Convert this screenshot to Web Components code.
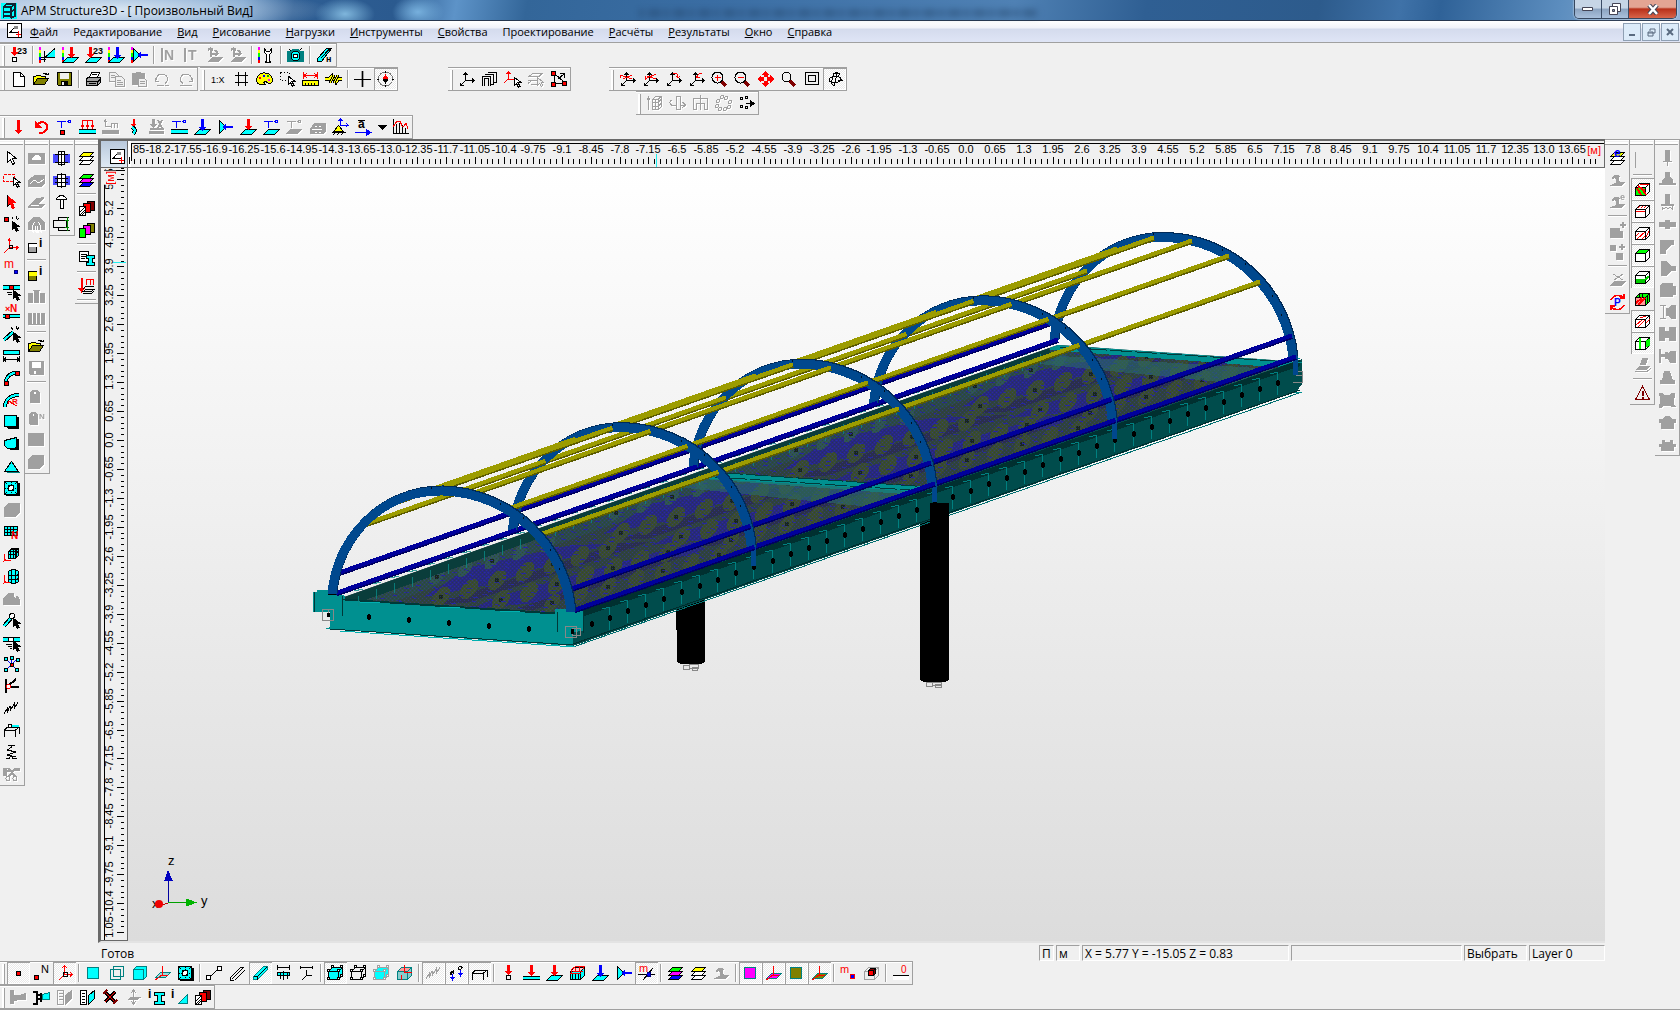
<!DOCTYPE html>
<html lang="ru">
<head>
  <meta charset="UTF-8">
  <title>APM Structure3D</title>
  <style>
    body {
      margin: 0;
      min-height: 100vh;
      display: flex;
      flex-direction: column;
      background: #f0f0f0;
      font: 12px/16px "Open Sans", "Noto Sans", sans-serif;
      color: #000;
      overflow: hidden;
    }
    .row {
      display: flex;
      height: 24px;
    }
    .gap-draw { margin-left: 2px; }
    .gap-view { margin-left: 50px; }
    .gap-zoom { margin-left: 38px; }
    .gap-edit { margin-left: 636px; }
    main {
      flex: 1;
      display: flex;
      min-height: 0;
      min-width: 0;
    }
    .dock {
      display: flex;
      align-items: flex-start;
      box-shadow: inset 0 1px #a0a0a0;
    }
    .dock.left { width: 98px; }
    .center {
      flex: 1;
      min-width: 0;
      display: flex;
      flex-direction: column;
    }
    footer {
      border-bottom: 1px solid #a0a0a0;
    }
  </style>
</head>
<body>
  <title-bar>APM Structure3D - [ Произвольный Вид]</title-bar>
  <menu-bar></menu-bar>

  <div class="row">
    <tool-bar items="load123 | resFrame resLoad res23 resPlate resSide | barN- barT- axes1- axes2- | wrench | camera | beamH"></tool-bar>
  </div>
  <div class="row">
    <tool-bar items="new open save | print copy- paste- undo- redo-"></tool-bar>
    <tool-bar class="gap-draw" items="scale hash palette pick ruler knot | cross compass*"></tool-bar>
    <tool-bar class="gap-view" items="axis frames axisPick layersPick- nodes"></tool-bar>
    <tool-bar class="gap-zoom" items="rotX rotY rotZ rotW zoomIn zoomOut pan zoomAll rect orbit*"></tool-bar>
  </div>
  <div class="row">
    <tool-bar class="gap-edit" items="extrude- spin- mirror- ring- move"></tool-bar>
  </div>
  <div class="row">
    <tool-bar items="force moment tempNode distLoad distAxis- bend numLoad- tempBar plateB sideB plateR tempPlate tempGray- snow- support accel drop graph"></tool-bar>
  </div>

  <main>
    <div class="dock left">
      <tool-bar vertical items="cursor selRect cursorR cursorN axisR mass nodeBar barN2 barPick dimBar arcNode arcR sq1 sq2 tri holed blob- meshN cubeM cylM blobN- barNode barMid star hinge spring1 base spring2 cut-"></tool-bar>
      <tool-bar vertical items="g1- g2- g3- g4- infoG | infoY g5- g6- | openF saveG- | can- canN- g7- g8-"></tool-bar>
      <tool-bar vertical items="bolt1 bolt2 bolt3 weld"></tool-bar>
      <tool-bar vertical items="layY layG | cards1 cards2 | listI | loadLay |"></tool-bar>
    </div>
    <div class="center">
      <child-window>
        <scale-ruler slot="top" axis="x" zero="838" min="-29" max="21" mark="528" cut="85"></scale-ruler>
        <scale-ruler slot="side" axis="y" zero="272" min="-17" max="9" mark="94" cut="1.05"></scale-ruler>
        <bridge-view></bridge-view>
      </child-window>
      <status-bar></status-bar>
    </div>
    <div class="dock">
      <tool-bar vertical="right" items="layE wave1- wave2- | plus1- plus2- | flat- pRot"></tool-bar>
      <tool-bar vertical="right" items="blank | bx1* bx2* bx3* bx4* bx5* bx6 bx7* bx8* stack- | warn"></tool-bar>
      <tool-bar vertical="right" items="s1- s2- s3- s4- s5- s6- s7- s8- s9- s10- s11- s12- s13- s14-"></tool-bar>
    </div>
  </main>

  <footer>
    <div class="row">
      <tool-bar items="dot* dotN axisN* | pl1 pl2 pl3 plAxis holed | seg rods rod* frameC frameA | cubeF* cubeW cubeG cubeA | spr* hang* tableT* | fNode fBar fPlate fCube plateB sideB2 massX* | layG layY wave1- | sqM* paM* sqO* paO* | massN cubeR | zeroL"></tool-bar>
    </div>
    <div class="row">
      <tool-bar items="pipeG- pipe listG- listC nails flatG- iBeam iTri cards1"></tool-bar>
    </div>
  </footer>

  <script>
    const K = '#000', R = '#f00', B = '#00f', C = '#0ff', G = '#a0a0a0', T = '#008080';
    const Y = '#ff0', O = '#808000', M = '#f0f', W = '#fff', L = '#0f0', D = '#800000';

    // small drawing helpers, all on a 17x16 grid
    const s = (d, c = K, w = 1) => `<path d="${d}" fill="none" stroke="${c}" stroke-width="${w}"/>`;
    const f = (d, c = K) => `<path d="${d}" fill="${c}"/>`;
    const o = (d, c = C, k = K) => `<path d="${d}" fill="${c}" stroke="${k}"/>`;
    const ci = (x, y, r, c = 'none', k = K) => `<circle cx="${x}" cy="${y}" r="${r}" fill="${c}" stroke="${k}"/>`;
    const t = (x, y, str, c = K, z = 9, w = 'bold') => `<text x="${x}" y="${y}" fill="${c}" font-size="${z}" font-weight="${w}">${str}</text>`;
    const sq = (x, y, c = R, n = 4) => o(`M${x + .5} ${y + .5}h${n}v${n}h-${n}z`, c);
    const dn = (x, y, h, c = R) => f(`M${x - 1} ${y}h3v${h - 4}h2v1h-1v1h-1v1h-1v1h-1v-1h-1v-1h-1v-1h-1v-1h2z`, c);
    const lf = (x, y, c = B) => f(`M${x} ${y}l4-4v3h7v2h-7v3z`, c);
    const plate = (c = C, k = K) => o('M.5 15.500l5-5h11l-5 5z', c, k);
    const side = (c = C, k = K) => o('M2.5 1.5v13l5-5v-3z', c, k);
    const bands = f('M0 0h2v3h-2z', M) + f('M0 3h2v3h-2z', Y) + f('M0 6h2v4h-2z', L) + f('M0 10h2v3h-2z', B) + f('M0 13h2v3h-2z', R);
    const tri3 = (c = K) => s('M7.5 2v8M7.5 9.5h9M7 10l-5 5M5.5 4l2-2 2 2M14 7.5l2 2-2 2M2.5 11.5v3h3', c);
    const ptr = (x, y, c = W) => o(`M${x + .5} ${y + .5}v8l2-2 2 4 1.500-1-2-4h3z`, c);
    const lay = (a, b, c) => o('M1.500 14.500l4-4h10l-4 4z', c) + o('M1.500 10.500l4-4h10l-4 4z', b) + o('M1.500 6.500l4-4h10l-4 4z', a);
    const disk = (c, k, w) => o('M1.500 1.500h14v13h-13l-1-1z', c, k) + f('M4 2h9v6h-9z', w) + f('M5 10h7v4h-7z', k) + f('M6 11h2v3h-2z', w);
    const folder = o('M.5 13.500v-8h2l1-1h4l1 1h4v2', Y) + o('M.5 13.500l4-6h11l-4 6z', O) + s('M9.500 3.500c1-2 4-2 5 0M12 3.500h3v-2');
    const cube = (a, b, c, k = K) => o('M1.500 6.500h10v8h-10z', a, k) + o('M1.500 6.500l4-4h10l-4 4z', b, k) + o('M11.500 6.500l4-4v8l-4 4z', c, k);
    const dots4 = (k, c = W) => ['0 4', '10 4', '13 0', '4 0', '0 12', '10 12', '13 9'].map(p => o(`M${p.split(' ')[0]}.5 ${p.split(' ')[1]}.5h2v2h-2z`, c, k)).join('');
    const lens = ci(6.5, 6.500, 5.500) + s('M11 11l4 4', D, 3);
    const table = c => s('M1 14.500v-6l3-3h12v6M1 8.500h11v6M12 8.500l4-3', c);
    const zig = c => s('M1 14l3-5v4l3-7v5l4-7v5l4-7', c);
    const waveG = f('M0 14l4-2c4 0 4-4 2-6l-3 1c0-4 5-6 8-3l-1 3c-1 3 2 4 6 3l-3 4z', G);
    const tee = (c = B) => s('M1 2.500h9M5.500 2v7', c) + ci(13.500, 2.500, 1.500, 'none', c);
    const gridP = (k = K) => s('M4.500 1v14M8.500 1v14M12.500 1v14M1 5.500h15M1 9.500h15', k);
    const pages = (a, b, c) => o('M9.500 1.500h7v9h-7z', c) + o('M5.500 3.500h7v9h-7z', b) + o('M1.500 6.500h6v9h-6z', a);

    const ICONS = {
      load123: dn(4, 0, 9) + sq(2, 10, W) + t(7, 7, '23', K, 9),
      resFrame: bands + f('M6 9l10-8v9h-10z', C) + s('M6 10.500l10-9M2 10.500h14M5.500 4v11M2 12.500h5'),
      resLoad: bands + plate() + dn(9, 0, 11),
      res23: plate() + dn(5, 0, 11) + t(8, 7, '23', K, 9),
      resPlate: bands + plate() + dn(9, 0, 12, B),
      resSide: bands + side() + lf(6, 8),
      barN: s('M1.500 1v14', G, 2) + t(4, 13, 'N', G, 14),
      barT: s('M1.500 1v14', G, 2) + t(5, 13, 'T', G, 14),
      axes1: f('M2 15l4-5h11l-4 5z', G) + s('M4.500 1v9M4 6.500h8M2 3l2.500-2 2.500 2M9 3l3 3.500-3 2', G, 2),
      axes2: f('M2 15l4-5h11l-4 5z', G) + s('M4.500 1v9M4 6.500h8M2 3l2.500-2 2.500 2M9 3l3 3.500-3 2', G, 2),
      wrench: bands + o('M6.500 1.500v4l2 2v6l-1 2h5l-1-2v-6l2-2v-4l-2 3h-3z', W),
      camera: o('M.5 4.500h4l1-2h6l1 2h4v10h-16z', T, T) + ci(8.500, 9, 4.500, C) + ci(8.500, 9, 2, W) + s('M2 2l2 2M15 1l-2 2'),
      beamH: o('M1.500 11.500l9-10h5l-10 13h-4z', C) + s('M5 11l9-9.500') + t(10, 15, 'н', K, 9),

      new: o('M3.500 1.500h7l4 4v10h-11z', W) + s('M10.500 1v4.500h4'),
      open: folder, openF: folder,
      save: disk(O, K, '#f0f0f0'),
      saveG: disk(G, G, W),
      print: o('M4.500 6.500l2-5h8l-2 5z', W) + o('M1.500 7.500l2-1h12v5l-3 3h-11z', G) + s('M1 10.500h12l3-3M4 12.500h7M7 3.500h5') + s('M12.500 10v5'),
      copy: o('M1.500 1.500h6l3 3v6h-9z', '#f0f0f0', G) + o('M7.500 5.500h6l3 3v7h-9z', '#f0f0f0', G) + s('M3 4.500h4M3 6.500h4M9 9.500h4M9 11.500h6M9 13.500h6', G),
      paste: f('M1 2h4v-1h5v1h4v12h-13z', G) + o('M7.500 7.500h6l2 2v6h-8z', '#f0f0f0', G) + s('M9 10.500h5M9 12.500h5', G),
      undo: s('M5 10.500h-3.500v-4M2 9c1-8 11-8 12 0l-3 4M11 14.500h4M3 14.500h7', G),
      redo: s('M12 10.500h3.500v-4M15 9c-1-8-11-8-12 0l3 4M3 14.500h12', G),
      scale: t(1, 12, '1:X', K, 9, 'normal'),
      hash: s('M5.500 1v14M12.500 1v14M2 4.500h13M2 11.500h13'),
      palette: o('M.5 9.500c0-10 15-10 16-1 0 4-3 5-5 3l-2-1-2 1 2 2c-3 1-9 0-9-4z', Y) + f('M3 6h2v2h-2z', R) + f('M7 4h2v2h-2z', B) + f('M11 4h2v2h-2z', '#0a0') + f('M12 8h2v2h-2z', M),
      pick: `<path d="M1.500 1.500h9v8h-9z" fill="none" stroke="${K}" stroke-dasharray="1 2"/>` + ptr(9, 5),
      ruler: s('M1.500 1v7M15.500 1v7M2 4.500h13M5 2l-3 2.500 3 2.500M12 2l3 2.500-3 2.500', R) + o('M.5 9.500h16v5h-16z', Y) + s('M3.500 12v3M6.500 12v3M9.500 12v3M12.500 12v3'),
      knot: s('M0 8h4l3-3 4 6 2-3h4', K, 4) + s('M0 8h4l3-3 4 6 2-3h4', Y, 2) + s('M5 12l4-8M9 12l4-8', K, 3) + s('M5 12l4-8M9 12l4-8', Y),
      cross: s('M7.500 0v16M9.500 0v16', G) + s('M8.500 0v16M0 8.500h17'),
      compass: ci(8.500, 8, 7, 'none', '#777') + f('M8.500 3l3 5h-6z', R) + f('M8.500 13l-3-5h6z') + s('M8.500 0v2M8.500 14v2M0 8.500h2M15 8.500h2'),
      axis: tri3(),
      frames: s('M1.500 15v-10h8v10M3.500 15v-8h4v8M4 3.500h8v10h-2M7 1.500h8v10h-3') + s('M15.500 2v9', K, 1),
      axisPick: s('M4.500 1v7M4 8.500h7M4 8l-4 4M2.500 3l2-2 2 2', R) + ptr(10, 6),
      layersPick: s('M2 5.500l4-3h9l-3 3zM1 9.500h9M1 12.500l4-3M4 13.500h7', G) + o('M10.500 6.500v8l2-2 2 3 1-1-1-3h2z', '#f0f0f0', G),
      nodes: s('M4 4v9M5 12h8M5 3l9 8M8 8l6-5M10 2.500h4v4') + sq(1, 0) + sq(1, 11) + sq(12, 10),
      rotX: tri3() + s('M1 4l12 4M4 8l9-4M1 4v3', R),
      rotY: tri3() + s('M14 3l-11 5M14 8l-9-3M3 5v4', R),
      rotZ: tri3() + s('M8 3c4-2 5 1 5 4M11 5l2 2 2-2', R),
      rotW: tri3() + s('M14 2c-4 0-5 2-5 5M8 5l1 2 3-1', R),
      zoomIn: lens + s('M4 6.500h6M6.500 4v6', R),
      zoomOut: lens + s('M4 6.500h6', R),
      pan: f('M8.500 0l4 4h-2v2h-4v-2h-2zM8.500 16l4-4h-2v-2h-4v2h-2zM0 8l4-4v2h3v4h-3v2zM17 8l-4-4v2h-3v4h3v2z', R),
      zoomAll: ci(6.500, 6, 4.500) + s('M10 10l5 5', D, 3),
      rect: s('M2.500 1.500h13v12h-13zM5.500 4.500h7v6h-7z', K),
      orbit: s('M3 9c0-4 11-5 12-1s-11 5-12 1M8 2l-3 10 3 3 3-12zM9 1l5 2-3 3M13 6l3 3h-4'),
      extrude: s('M2.500 3v12M1 5l1.500-3 1.500 3M6.500 4.500l3-3h6v10l-3 3h-6zM6 4.500h6v10M12.500 4l3-3M6 7.500h6l3-3M6 11.500h6l3-3M9.500 4v10', G),
      spin: s('M7.500 1h4v13h-4zM3 5c-4 2-2 6 4 6M11 10.500h5M13 7l4 3-4 3', G),
      mirror: s('M8.500 0v15M1.500 14v-11h14v11h-3v-6h-8v6z', G),
      ring: ['6 0', '10 1', '14 5', '13 10', '9 12', '4 12', '1 9', '2 4'].map(p => ci(+p.split(' ')[0] + 1, +p.split(' ')[1] + 2, 1.500, 'none', G)).join(''),
      move: ['2 2', '7 1', '2 10', '7 11'].map(p => { const [x, y] = p.split(' '); return s(`M${x}.5 ${y}.5h2v2h-2z`); }).join('') + s('M8 8.500h7') + f('M12 5l5 3.500-5 3.500z'),

      force: dn(8, 1, 14),
      moment: s('M4 6c4-5 10-3 10 2s-4 6-8 6', R, 2) + f('M2 2v7h7z', R),
      tempNode: tee() + sq(4, 11),
      distLoad: s('M3.500 1v8M8.500 1v8M13.500 1v8M3 1.500h11M2 6l1.500 3 1.500-3M7 6l1.500 3 1.500-3M12 6l1.500 3 1.500-3', R) + f('M0 10h17v1h-17zM0 14h17v1h-17z') + f('M0 11h17v3h-17z', C),
      distAxis: s('M3.500 1v6h6M9.500 4v5M15.500 4v5M9 4.500h7M12.500 4v5M2 3l1.500-2 1.500 2', G) + f('M0 11h17v4h-17z', G),
      bend: s('M8.500 0v7M6.500 5l2 2 2-2', R, 2) + s('M7 8c4 2 3 5 1 7', K, 4) + s('M7 8c4 2 3 5 1 7', C, 2),
      numLoad: dn(5, 0, 9, G) + s('M10 1l4 8M14 1l-4 8M2 9.500h14', G, 2) + f('M1 12h15v3h-15z', G),
      tempBar: tee() + f('M0 10h17v1h-17zM0 14h17v1h-17z') + f('M0 11h17v3h-17z', C),
      plateB: plate() + dn(8, 0, 12, B),
      sideB: side() + lf(5, 8), sideB2: side() + lf(6, 8),
      plateR: plate() + dn(8, 0, 11),
      tempPlate: tee() + plate(),
      tempGray: tee(G) + f('M0 15l4-5h12l-4 5z', G),
      snow: f('M1 15v-5l4-6h12v8l-3 3z', G) + s('M3 10.500h10M6 7.500h2M10 7.500h2M6 13h2M10 13h2', W),
      support: o('M6.500 6.500l5 6h-10z', Y) + s('M0 13.500h14M1 16l2-2M5 16l2-2M9 16l2-2') + s('M8.500 0v6h8M6.500 2l2-2 2 2M14 4l2 2-2 2', B),
      accel: t(3, 9, 'a', K, 12) + s('M3 1.500h7') + s('M0 13.500h12', B, 1) + f('M11 10l6 3.500-6 3.500z', B),
      drop: f('M4 6h9l-4.500 5z'),
      graph: s('M1.500 0v14.500h15M4.500 14v-9M7.500 14v-10M10.500 14v-8M13.500 14v-5') + s('M1 8l4-6h3l2 5h2l2-3 2 6', R),

      cursor: o('M4.500 1.500v11l3-3 2 5 2-1-2-5h4z', W),
      selRect: `<path d="M.5 2.500h11v7h-11z" fill="none" stroke="${R}" stroke-dasharray="3 1"/>` + ptr(10, 5),
      cursorR: f('M4 1v12l3-3 2 5 3-1-2-5h4z', R) + s('M4 1v12l3-3', K),
      cursorN: sq(1, 1) + ptr(9, 5, K) + s('M9 1l1 2M13 0v3M16 2l-2 2'),
      axisR: s('M6.500 1v9M6 9.500h9M6 10l-5 5M5 3l1.500-2 1.500 2M13 8l2 1.500-2 2', R) + s('M6.500 7.500h3v3h-3z'),
      mass: t(1, 8, 'm', R, 12, 'normal') + ci(13, 12, 2, B, '#000080'),
      nodeBar: f('M0 3h17v5h-17z') + f('M0 4h17v3h-17z', C) + sq(6, 3) + ptr(10, 8, K) + s('M4 10.500h5M5 12.500h4'),
      barN2: t(7, 8, 'N', R, 10) + t(2, 8, '×', R, 9) + f('M0 10h17v4h-17z') + f('M0 11h17v2h-17z', C) + sq(2, 10),
      barPick: s('M1 14l9-8', K, 4) + s('M1 14l9-8', C, 2) + ptr(10, 6, K) + s('M8 1l2 3M13 0v3M16 1l-2 3'),
      dimBar: o('M.5 2.500h16v4h-16z') + s('M.5 8v6M16.500 8v6M1 11.500h15M3 9.500l-2 2 2 2M14 9.500l2 2-2 2'),
      arcNode: s('M3 12c0-5 4-9 10-9', K, 4) + s('M3 12c0-5 4-9 10-9', C, 2) + sq(1, 11) + sq(12, 1),
      arcR: s('M2 15c0-7 5-12 14-12', K, 4) + s('M2 15c0-7 5-12 14-12', C, 2) + s('M14 14l-9-5M5 12v-3h3', R) + t(9, 12, 'R', R, 8),
      sq1: f('M3 3h13v12h-11l-2-2z', K) + o('M1.500 1.500h12v11h-12z', C, K),
      sq2: f('M4 4l12-1v11h-9z', K) + o('M1.500 4.500l4-1 8-2v9l-2 2h-7l-3-3z', C, K),
      tri: f('M9 4l8 11h-13z', T) + o('M8.500 3.500l7 10h-14z', C, K),
      holed: f('M3 3h14v13h-14z') + o('M1.500 1.500h13v13h-13z', C) + `<path d="M2 2l12 12M14 2l-12 12M8 2v12M2 8h12" stroke="#000" stroke-dasharray="1 1"/>` + ci(8, 8, 2.500, W),
      blob: f('M1 5l4-4h12v9l-5 5h-11z', G),
      meshN: o('M1.500 2.500h13v9h-13z') + s('M4.500 2v10M7.500 2v10M10.500 2v10M1 5.500h13M1 8.500h13') + t(8, 15, 'N', R, 10),
      cubeM: o('M5.500 5.500l3-3h7v7l-3 3h-7z') + s('M5 5.500h7v7M12.500 5l3-3M7.500 4v9M10.500 4v9M5 8.500h7l3-3M7 3.500h7M13.500 4v7') + s('M1.500 8v6.500h6M0 16l3-3', R),
      cylM: o('M5.500 4c0-3 10-3 10 0v9c0 3-10 3-10 0z') + s('M5 6.500c2 2 9 2 10 0M5 10.500c2 2 9 2 10 0M8.500 2v13M12.500 2v13') + s('M1.500 7v7.500h5M0 16l3-3', R),
      blobN: f('M0 9l5-6h6v4l2 2v-3h2l2 4v5h-17z', G),
      barNode: s('M1 14l8-9', K, 4) + s('M1 14l8-9', C, 2) + ci(9, 4, 2.500, W) + ptr(10, 6, K),
      barMid: f('M0 3h17v5h-17z') + f('M0 4h17v3h-17z', C) + ci(8, 5.500, 2.500, W) + ptr(10, 7, K) + s('M3 10.500h6M5 12.500h4M7 14.500h2'),
      star: s('M3 3l11 11M14 3l-11 11M8.500 2v6', B) + sq(1, 1, C, 3) + sq(7, 0, C, 3) + sq(13, 2, C, 3) + sq(1, 12, C, 3) + sq(12, 12, C, 3) + sq(7, 7, R, 3),
      hinge: s('M3 1v14', K, 2) + s('M5 8l8-7M5 8.500h11', K, 2) + ci(5.500, 8.500, 2, W, R),
      spring1: zig(K), spr: zig(G),
      base: table(K) + ci(7, 4, 2, W) + s('M9 3.500h7', C, 2),
      spring2: s('M5 1.500h7M8.500 1v2l-4 3 8 2-8 3 8 2M3 14.500h3l2-3 2 3h4'),
      cut: f('M0 2h4v8h-4zM12 2h5v3h-5z', G) + s('M5 2l7 8M13 2l-7 8M3 4.500h5', G, 2) + ci(5, 12.500, 2, 'none', G) + ci(12, 12.500, 2, 'none', G),

      g1: f('M0 3h17v11h-17z', G) + f('M4 10v-2l3-3h3l3 3v2z', W),
      g2: f('M0 15v-7l7-5h10v8l-3 4z', G) + s('M2 12l4-4 5 3 5-4', W),
      g3: f('M0 12l9-8 7-1v2l-6 5h7l-4 4h-13z', G) + s('M3 11.500h8', W),
      g4: f('M0 14v-7l5-6h7l5 6v7z', G) + s('M4.500 16v-6l2-4M12.500 16v-6l-2-4M7.500 10v5h2v-5', W),
      infoG: o('M.5 5.500h8v9h-8z', G) + f('M1 6h8v3h-8z', W) + t(11, 9, 'i', K, 12),
      infoY: o('M.5 5.500h8v9h-8z', O) + f('M1 6h8v4h-8z', Y) + t(11, 9, 'i', K, 12),
      g5: f('M0 5h5v-3h7v3h5v10h-17z', G) + s('M5.500 3v12M11.500 3v12', W),
      g6: f('M0 15v-12h17v12z', G) + s('M4.500 3v11M8.500 3v11M12.500 3v11', W),
      can: f('M2 5c0-4 10-4 10 0v9c0 2-10 2-10 0z', G) + ci(7, 5, 1.500, W, G),
      canN: f('M1 5c0-4 9-4 9 0v9c0 2-9 2-9 0z', G) + ci(5.500, 5, 1.500, W, G) + t(11, 9, 'N', G, 8),
      g7: f('M0 1h16v13h-16z', G), g8: f('M0 5l4-4h12v9l-4 5h-12z', G),
      bolt1: f('M0 4h5v9h-5zM12 4h5v9h-5z', '#4848ff') + o('M5.500 1.500h6v13h-6z', W) + s('M2 4.500h13M2 12.500h13M8.500 1v15'),
      bolt2: f('M0 4h5v9h-5zM12 4h5v9h-5z', '#4848ff') + o('M4.500 2.500h8v12h-8z', W) + s('M2 6.500h13M2 10.500h13M8.500 1v15'),
      bolt3: o('M3.500 5.500c1-5 9-5 10 0z', W) + o('M7.500 5.500h3v9h-3z', W),
      weld: s('M16 1.500h-11v3M5.500 11v3.500h11') + o('M.5 4.500h13v7h-13z', '#f0f0f0') + s('M14.500 1v14M12 4.500h4M12 11.500h4', '#080', 1),
      layY: lay(Y, W, W), layG: lay(L, M, B),
      cards1: pages(W, R, D) + s('M2 12l5-5M2 15l5-5M4 15l3-3'),
      cards2: pages(L, M, O),
      listI: o('M1.500 1.500h9v10h-9z', W) + s('M3 4.500h6M3 6.500h6M3 8.500h4') + o('M8.500 5.500h8v3h-2v4h2v3h-8v-3h2v-4h-2z'),
      loadLay: s('M3.500 0v13M1 10l2.500 3 2.500-3', R, 2) + s('M8 1.500h8M8.500 1v6M12.500 1v6M15.500 1v6', R) + s('M5 13.500l3-2h8l-3 2zM5 10.500l3-2h8M5 15.500h8l3-2'),

      layE: lay(Y, W, W) + t(5, 7, 'e', B, 12),
      wave1: waveG,
      wave2: waveG + t(11, 6, 'e', G, 9),
      plus1: f('M1 6h10v3h3v7h-13z', G) + s('M14 0v6M11 3h6', G, 2),
      plus2: f('M1 1h6v6h-6zM7 9h7v7h-7z', G) + s('M13 0v6M10 3h6', G, 2),
      flat: f('M1 14l4-5h12l-4 5z', G) + s('M4 2l10 6M14 2l-9 6', G),
      pRot: t(5, 12, 'P', B, 10) + s('M2 6c2-5 9-6 13-2M15 11c-2 5-9 6-13 2M15 0v4h-4M2 16v-4h4', R, 1.500),
      blank: s('M1.500 0v16', G),
      bx1: cube('#9f9', W, W) + f('M2 7h9v7h-9z', L) + s('M3 7l4 7M7 6l5 8M4 5l7 5', R, 2) + s('M6 3.500h9', R),
      bx2: cube(W, W, W) + s('M4 5l2-2M7 5l2-2M10 5l2-2M2 8h9', R),
      bx3: cube(W, W, W) + s('M2 11l3-3M3 14l8-7M8 14l3-3M12 12l3-6', R),
      bx4: cube(W, L, W), bx5: cube(W, W, W) + s('M2 10.500h9l4-3M2 12.500h9', '#0c0', 2),
      bx6: cube('#f99', L, L) + s('M2 12l6-5M4 14l7-7', R, 2) + s('M5.500 2v4M8.500 2v4M13.500 4v8'),
      bx7: cube(W, W, W) + s('M2 12l6-5M4 14l7-7M6 5l6-2M12 10l4-4', R),
      bx8: cube(W, W, W) + s('M5.500 3v11M12.500 5v7M14.500 4v7', L, 2),
      stack: s('M1 14.500h12l4-3M2 12.500h10l4-3', G) + f('M2 12l3-3h11l-4 4h-10zM6 8l2-7h6l-2 7z', G),
      warn: o('M8.500 1.500l7 13h-14z', '#f0f0f0', D) + s('M8.500 6v5M8.500 12v1.500', D, 2),
      s1: f('M6 0h5v11h2v1h-4v4h-1v-4h-4v-1h2z', G), s2: f('M6 0h5v5l3 3v3h3v2h-17v-2h3v-3l3-3z', G),
      s3: f('M6 0h5v10h-5zM2 10h13v2h-13z', G) + s('M3 16v-3l2 2 2-2 2 2 2-2 2 2v-3', G),
      s4: f('M0 6h6v-2h5v2h6v5h-6v2h-5v-2h-6z', G), s5: f('M1 2h14v5h-3l-5 5v4h-6z', G),
      s6: f('M2 1h5l5 5h5v5h-5l-5 5h-5z', G), s7: f('M1 3l2-2h11v3h3v9h-3v2h-13z', G),
      s8: s('M1 1.500h6M1 14.500h6M4.500 1v14', G) + f('M7 4h3l2-3h5v14h-5l-2-3h-3z', G),
      s9: f('M0 1h6v4h4v-4h7v14h-7v-3h-4v3h-6z', G), s10: f('M0 1h2v5h4v-2h3v2l2-3h6v12h-6l-2-4h-3v-2h-4v6h-2z', G),
      s11: f('M5 1h6l3 9h2v4h-15v-4h2z', G), s12: f('M0 1h4l1 2h6l1-2h4v4l-1 1v6l2 3h-4l-2-1h-7l-1 2h-3v-4l1-1v-6l-1-2z', G),
      s13: f('M0 5h4l2-3h5l2 3h4v4h-2v6h-13v-6h-2z', G), s14: f('M3 4h3v2h5v-2h3v4h3v3h-2v4h-13v-4h-2v-3h3z', G),

      dot: sq(6, 6), dotN: sq(1, 10) + t(8, 8, 'N', K, 11, 'normal'),
      axisN: s('M8.500 1v9M8 9.500h9M8 10l-5 5M6 3l2.500-2 2.500 2M14 7l2 2.500-2 2', R) + s('M7.500 7.500h4v4h-4z'),
      pl1: o('M2.500 2.500h11v11h-11z', C, T), pl2: s('M2.500 4.500h10v10h-10zM5.500 1.500h10v10h-10z', T),
      pl3: o('M2.500 4.500l3-3h10v10l-3 3z', C, T) + o('M2.500 4.500h10v10h-10z', C, T),
      plAxis: o('M1.500 12.500l5-5h10l-5 5z', '#9dd', T) + s('M8.500 1v9M1 15l7-5h6', R),
      seg: s('M3 13l10-10') + o('M.5 10.500h4v4h-4z', W) + o('M11.500 1.500h4v4h-4z', W),
      rods: s('M1 13l11-11M3 14l12-12M6 15l10-10M12 2l3 0M1 13v2h4'),
      rod: o('M1.500 11.500l10-10h4v3l-10 10h-4z', C, T) + s('M2 11.500h3v3M5 12l10-10'),
      frameC: s('M2 2.500h13M2 0v5M14.500 0v5') + o('M2.500 7.500h12v3h-12z') + s('M5 8v6M8.500 6v9M12 8v6'),
      frameA: s('M2 2.500h13M2.500 1v3M14.500 1v3M8.500 5v6M8 10.500h6M8 11l-4 4'),
      cubeF: cube(C, C, C) + dots4(K), cubeW: cube('#f0f0f0', '#f0f0f0', '#f0f0f0') + dots4(K),
      cubeG: cube(C, C, C, G) + dots4(G), cubeA: cube('#8cc', '#f99', '#8cc', T) + s('M8.500 0v8M8 7.500h8M5 10v5', R),
      hang: s('M3 9l3-4M12 5l3-3') + ci(4, 8, 1.500) + ci(12, 3, 1.500) + s('M4.500 9v5M12.500 5v5', B) + f('M2 12h5l-2.500 4zM10 8h5l-2.500 4z', B),
      tableT: table(K),
      fNode: dn(8, 0, 10) + s('M6.500 10.500h4v4h-4z'), fBar: dn(8, 0, 11) + f('M0 11h17v1h-17zM0 14h17v1h-17z') + f('M0 12h17v2h-17z', C),
      fPlate: plate() + dn(8, 0, 11), fCube: cube(C, '#fcc', C) + s('M2 5l5-4h9M2 5v3M6 3v4M10 1v5M14 1v3M1 8h11M4 6h10', R) + s('M6.500 9v5M3.500 9v5M9.500 9v5'),
      massX: t(1, 7, 'm', R, 11, 'normal') + s('M0 9.500h17M5 15l10-12') + ci(11, 9.500, 2, B, '#000080'),
      sqM: o('M2.500 2.500h11v11h-11z', M, T), sqO: o('M2.500 2.500h11v11h-11z', O, T),
      paM: o('M1.500 13.500l5-5h10l-5 5z', M, T) + s('M8.500 1v9M1 15l7-5h6', R), paO: o('M1.500 13.500l5-5h10l-5 5z', O, T) + s('M8.500 1v9M1 15l7-5h6', R),
      massN: t(0, 8, 'm', R, 11, 'normal') + o('M10.500 9.500h4v4h-4z', B, R), cubeR: cube('#eee', '#eee', '#eee', G) + sq(5, 5, R, 5) + o('M5.500 5.500l2-2h5l-2 2zM10.500 5.500l2-2v5l-2 2z', D),
      zeroL: t(9, 8, '0', R, 10, 'normal') + s('M1 10.500h16') + f('M1 11h16v4h-16z', W),
      pipeG: f('M0 1h4v5h5l7-2v7h-7l-5 1v3h-4z', G), pipe: s('M0 2.500h4v12h-4M4 6h6M4 10h6M8 4v9', K, 2) + o('M9.500 5.500l7-2v7h-7z', C, T),
      listG: s('M1.500 1.500h6v14h-6zM3 4.500h4M3 7.500h4M3 10.500h4', G) + f('M9 6l7-5v9l-7 6z', G),
      listC: o('M1.500 1.500h6v14h-6z', W) + s('M3 4.500h3M3 7.500h3M3 10.500h3M3 13h3') + o('M9.500 6.500l6-5v8l-6 6z'),
      nails: s('M3 3l11 11M13 3l-10 10', K, 3) + s('M3 3l11 11M13 3l-10 10', R) + s('M1 5l4-4M11 15l4-4', D, 2),
      flatG: f('M2 11l4-3h11l-5 3zM8 1h1v14h-1z', G) + s('M6 12l2.500 3 2.500-3M6 4l2.500-3 2.500 3', G),
      iBeam: t(0, 9, 'i', K, 12) + o('M6.500 3.500h10v3h-3v6h3v3h-10v-3h3v-6h-3z'),
      iTri: t(0, 9, 'i', K, 12) + o('M7.500 14.500h9v-9z', C, T)
    };

    class ToolBar extends HTMLElement {
      constructor() {
        super();
        this.attachShadow({ mode: 'open' });
      }

      connectedCallback() {
        const body = this.getAttribute('items').split(' ').map(item => {
          if (item === '|') return '<span class="sep"></span>';
          const name = item.replace(/[*-]$/, '');
          const cls = (item.endsWith('*') ? 'on ' : '') + (name === 'drop' || name === 'blank' ? name : '');
          const off = item.endsWith('-') ? 'disabled' : '';
          return `<button type="button" aria-label="${name}" class="${cls}" ${off}><svg viewBox="0 0 17 16" shape-rendering="crispEdges">${ICONS[name]}</svg></button>`;
        }).join('');

        this.shadowRoot.innerHTML = `
          <style>
            :host {
              display: flex;
              flex: none;
              box-sizing: border-box;
              height: 24px;
              padding-left: 7px;
              border-top: 1px solid #a0a0a0;
              border-bottom: 1px solid #a0a0a0;
              border-right: 1px solid #a0a0a0;
              background: linear-gradient(#a0a0a0, #a0a0a0) 4px 2px / 1px 20px no-repeat,
                linear-gradient(#fff, #fff) 2px 2px / 2px 20px no-repeat, #f0f0f0;
              box-shadow: inset 0 1px #fff;
            }
            :host([vertical]) {
              flex-direction: column;
              width: 25px;
              height: auto;
              padding: 7px 1px 0 0;
              border-left: 0;
              background: linear-gradient(#a0a0a0, #a0a0a0) 0 4px / 23px 1px no-repeat,
                linear-gradient(#fff, #fff) 0 2px / 23px 2px no-repeat, #f0f0f0;
            }
            :host([vertical="right"]) { padding: 7px 0 0 1px; }
            button {
              flex: none;
              display: flex;
              align-items: center;
              justify-content: center;
              box-sizing: border-box;
              width: 23px;
              height: 22px;
              padding: 0;
              border: 0;
              background: none;
            }
            .drop { width: 14px; }
            .blank { height: 25px; }
            .on {
              background: repeating-conic-gradient(#fff 0 25%, #eaeaea 0 50%) 0 0 / 2px 2px;
              box-shadow: inset 1px 1px #a0a0a0, inset -1px -1px #fff;
            }
            svg {
              flex: none;
              width: 17px;
              height: 16px;
              overflow: visible;
              font-family: "Liberation Sans", sans-serif;
            }
            button:disabled svg { filter: drop-shadow(1px 1px 0 #fff); }
            .sep {
              flex: none;
              width: 1px;
              margin: 2px 2px;
              border-left: 1px solid #a0a0a0;
              background: #fff;
            }
            :host([vertical]) .sep {
              width: auto;
              height: 1px;
              border-left: 0;
              border-top: 1px solid #a0a0a0;
            }
          </style>
          ${body}
        `;
      }
    }

    class TitleBar extends HTMLElement {
      constructor() {
        super();
        this.attachShadow({ mode: 'open' });
        this.shadowRoot.innerHTML = `
          <style>
            :host {
              display: flex;
              box-sizing: border-box;
              height: 21px;
              border-bottom: 1px solid #26364e;
              background:
                radial-gradient(ellipse 30px 16px at 345px 14px, #7fb6dc, transparent),
                radial-gradient(ellipse 26px 16px at 418px 12px, #77b0dd, transparent),
                radial-gradient(ellipse 220px 24px at 110px 10px, #dbe7f3, transparent),
                linear-gradient(100deg, #9cb9da 0, #6f9bc9 240px, #2e5e94 290px, #2b5a8f 390px, #5d93c8 450px, #336699 520px, #3a6da3 700px, #4f81b4 1000px, #2f5f93 1130px, #2d5b8c 1300px, #3f72a8 1380px, #2f6298 1420px, #5d8ebf 1540px, #9fbbdc 1680px);
            }
            .icon { width: 16px; height: 16px; margin: 3px 4px 0 1px; }
            .name { flex: 1; line-height: 21px; }
            .ghost {
              width: 400px;
              height: 8px;
              margin: 9px 535px 0 0;
              background: repeating-linear-gradient(90deg, #24456b 0 5px, #3e6c9f 5px 9px, #24456b 9px 22px, #3e6c9f 22px 25px);
              filter: blur(3px);
              opacity: .45;
            }
            .wrap { display: flex; height: 18px; margin-right: 3px; border: 1px solid #36475f; border-top: 0; border-radius: 0 0 5px 5px; overflow: hidden; box-shadow: 0 0 2px #fff; }
            button {
              display: flex;
              align-items: center;
              justify-content: center;
              width: 27px;
              padding: 0;
              border: 0;
              border-right: 1px solid #3a4c66;
              background: linear-gradient(#c6d5e6 0 45%, #8ba3c0 50%, #a9c0dc);
            }
            .close {
              width: 47px;
              border-right: 0;
              background: linear-gradient(#e3a493 0 40%, #b8301a 50%, #d8654a);
            }
          </style>
          <svg class="icon" viewBox="0 0 16 16" shape-rendering="crispEdges">
            <path d="M0 0h16v16h-16z" fill="#0ff"/>
            <path d="M2 4h8v11M2.500 4v11M2 9h8M2 13h8M10 4l4-3v12l-4 2M2 4l4-3h8M10 9l4-3" fill="none" stroke="#123" stroke-width="1.500"/>
          </svg>
          <span class="name"><slot></slot></span>
          <span class="ghost"></span>
          <span class="wrap">
            <button type="button" aria-label="Свернуть"><svg width="12" height="6"><path d="M.5 1.500h10v3h-10z" fill="#fff" stroke="#445"/></svg></button>
            <button type="button" aria-label="Развернуть"><svg width="12" height="12"><path d="M3.500 .5h8v8h-8z" fill="#fff" stroke="#445"/><path d="M.5 3.500h8v8h-8z" fill="#fff" stroke="#445"/><path d="M3.500 6.500h2v2h-2z" fill="#89a" stroke="#445"/></svg></button>
            <button type="button" class="close" aria-label="Закрыть"><svg width="12" height="11"><path d="M2 1l8 9M10 1l-8 9" stroke="#445" stroke-width="4.500"/><path d="M2 1l8 9M10 1l-8 9" stroke="#fff" stroke-width="2.500"/></svg></button>
          </span>
        `;
      }
    }

    class MenuBar extends HTMLElement {
      constructor() {
        super();
        this.attachShadow({ mode: 'open' });
        const items = ['_Файл', 'Редактирование', '_Вид', '_Рисование', '_Нагрузки', '_Инструменты', '_Свойства', 'Проектирование', '_Расчёты', '_Результаты', '_Окно', '_Справка'];
        this.shadowRoot.innerHTML = `
          <style>
            :host {
              display: flex;
              box-sizing: border-box;
              height: 22px;
              padding: 0 1px 0 7px;
              border-bottom: 1px solid #a0a0a0;
              background: linear-gradient(#fff 0, #f0f2f9 7px, #d4dbed 8px, #dfe5f6);
            }
            nav { flex: 1; display: flex; gap: 1px; padding: 1px 0 0 1px; }
            button {
              padding: 0 7px;
              border: 0;
              background: none;
              font: inherit;
              font-size: 11px;
              line-height: 20px;
              color: #000;
              white-space: nowrap;
            }
            .doc { width: 15px; height: 15px; margin-top: 2px; }
            .win {
              width: 18px;
              height: 18px;
              margin: 2px 0 0 1px;
              padding: 0;
              border: 1px solid #8fa0b4;
              background: #dcebf9;
              display: flex;
              align-items: center;
              justify-content: center;
            }
          </style>
          <svg class="doc" viewBox="0 0 15 15" shape-rendering="crispEdges"><path d="M.5.5h14v14h-14z" fill="#fff" stroke="#000"/><path d="M9 3l-6 6.500h8" fill="none" stroke="#000"/><path d="M7 3h4v3h-4z" fill="#888"/><path d="M11.500 8v6M9 11.500h5" stroke="red"/></svg>
          <nav>${items.map(i => `<button type="button">${i.replace(/_(.)/, '<u>$1</u>')}</button>`).join('')}</nav>
          <button type="button" class="win" aria-label="Свернуть окно"><svg width="8" height="8"><path d="M1 6h6v2h-6z" fill="#5a6b80"/></svg></button>
          <button type="button" class="win" aria-label="Восстановить окно"><svg width="9" height="9"><path d="M3 3v-2h5v4h-2M1 4h5v4h-5zM1 5h5" fill="none" stroke="#5a6b80"/></svg></button>
          <button type="button" class="win" aria-label="Закрыть окно"><svg width="8" height="8"><path d="M1 1l6 6M7 1l-6 6" stroke="#5a6b80" stroke-width="2"/></svg></button>
        `;
      }
    }

    class ChildWindow extends HTMLElement {
      constructor() {
        super();
        this.attachShadow({ mode: 'open' });
        this.shadowRoot.innerHTML = `
          <style>
            :host {
              flex: 1;
              display: grid;
              grid-template: 27px minmax(0, 1fr) / 27px minmax(0, 1fr);
              min-height: 0;
              box-sizing: border-box;
              border-top: 2px solid #696969;
              border-left: 3px solid #696969;
              border-bottom: 2px solid #e3e3e3;
            }
            .corner {
              display: flex;
              padding: 8px 0 0 9px;
              box-sizing: border-box;
              border: 0;
              border-bottom: 1px solid #696969;
              border-right: 1px solid #696969;
              background: linear-gradient(#b9c9dc, #dfe9f4);
            }
          </style>
          <button type="button" class="corner" aria-label="Вид"><svg width="15" height="15" shape-rendering="crispEdges"><path d="M.5.5h14v14h-14z" fill="#fff" stroke="#000"/><path d="M9 3l-6 6.500h8" fill="none" stroke="#000"/><path d="M7 3h4v3h-4z" fill="#888"/><path d="M11.500 8v6M9 11.500h5" stroke="red"/></svg></button>
          <slot name="top"></slot>
          <slot name="side"></slot>
          <slot></slot>
        `;
      }
    }

    class ScaleRuler extends HTMLElement {
      constructor() {
        super();
        this.attachShadow({ mode: 'open' });
      }

      connectedCallback() {
        const num = name => Number(this.getAttribute(name));
        const horizontal = this.getAttribute('axis') === 'x';
        const zero = num('zero');
        const step = horizontal ? 28.875 : -28.95;
        let ticks = '';
        let labels = '';

        for (let n = num('min'); n <= num('max'); n++) {
          const at = zero + n * step;
          // the first label runs past the end of the scale, only its tail is shown
          const cut = n === num('min');
          const text = cut ? this.getAttribute('cut') : (n * 0.65).toFixed(2).replace(/0$/, '');
          const pos = Math.round(cut ? at + (horizontal ? 10 : -5) : at);
          labels += horizontal
            ? `<text x="${pos}" y="12">${text}</text>`
            : `<text transform="translate(12 ${pos}) rotate(-90)">${text}</text>`;
          for (let k = 0; k < 5; k++) {
            const p = Math.round(at + k * step / 5) + 0.5;
            if (horizontal) ticks += `M${p} ${k ? 18 : 16}V23`;
            else ticks += `M${k ? 20 : 16} ${p}H23`;
          }
        }

        const mark = num('mark');
        this.shadowRoot.innerHTML = `
          <style>
            :host {
              display: flex;
              position: relative;
              overflow: hidden;
              box-sizing: border-box;
              background: #f0f0f0;
              border-right: 1px solid #696969;
              border-bottom: 1px solid #696969;
            }
            svg { width: 100%; height: 100%; font: 11px "Liberation Sans", sans-serif; text-anchor: middle; overflow: hidden; }
            b { position: absolute; color: #f00; background: #f0f0f0; font: 11px/12px "Liberation Sans", sans-serif; }
            .x { right: 3px; top: 3px; }
            .y { left: 3px; top: 3px; writing-mode: vertical-rl; transform: rotate(180deg); }
          </style>
          <svg shape-rendering="crispEdges">
            ${horizontal ? '<path d="M0 0h3v30h-3z" fill="#fff"/>' : ''}
            ${labels}
            <path d="${ticks}" stroke="#000"/>
            <path d="${horizontal ? 'M3 2.500H3000M3.500 2V20' : 'M3 2.500H24M3.500 2V3000'}" stroke="#000" fill="none"/>
            <path d="${horizontal ? `M${mark}.5 13v13` : `M12 ${mark}.5h13`}" stroke="#2ee"/>
          </svg>
          <b class="${horizontal ? 'x' : 'y'}">[м]</b>
        `;
      }
    }

    class BridgeView extends HTMLElement {
      constructor() {
        super();
        this.attachShadow({ mode: 'open' });
        this.shadowRoot.innerHTML = `
          <style>
            :host {
              display: block;
              overflow: hidden;
              background: linear-gradient(#fff, #dcdcdc);
            }
            svg { display: block; width: 100%; height: 100%; font: 13px "Liberation Sans", sans-serif; }
          </style>
          <svg viewBox="128 168 1477 773">${this.model()}${this.triad()}</svg>
        `;
      }

      // point on the deck: u runs along the bridge, v across it
      deck(u, v) {
        return [Math.round(340 + u * 718 + v * 231), Math.round(598 - u * 254 + v * 14)];
      }

      arch(i) {
        const d = 'M332 594C336 540 380 490 443 491C510 493 565 545 571 612';
        return `<g transform="translate(${i * 180.5} ${i * -63.4})" fill="none" shape-rendering="crispEdges">
          <path d="${d}" stroke="#002a58" stroke-width="9" transform="translate(1 -1)"/>
          <path d="${d}" stroke="#00488e" stroke-width="9"/>
          ${i ? '<path d="M573 610V629" stroke="#00488e" stroke-width="5"/>' : ''}
          <path d="M431 488h1M500 504h1M523 518h1M559 569h1M550 550h1" stroke="#001020" stroke-width="2"/>
        </g>`;
      }

      bar(x, y, i, color, edge) {
        const x1 = x + i * 180.5, y1 = y - i * 63.4;
        const d = `M${x1} ${y1}l180.500-63.400`;
        return `<path d="${d}" stroke="${edge}" stroke-width="5" transform="translate(0 1)"/><path d="${d}" stroke="${color}" stroke-width="4"/>`;
      }

      deckPattern() {
        let out = '';
        const poly = (pts, fill) => `<polygon points="${pts.map(p => this.deck(...p).join()).join(' ')}" fill="${fill}"/>`;
        for (let k = 0; k < 4; k++) {
          const u = k / 4;
          out += poly([[u, 0], [u + .25, 0], [u + .25, .24], [u, .24]], '#2b4a48');
          out += poly([[u + .02, .3], [u + .13, .16], [u + .22, .3], [u + .24, .42], [u + .08, .42]], '#272782');
          out += poly([[u, .42], [u + .24, .46], [u + .25, .56], [u + .01, .52]], '#2a2d50');
          out += poly([[u - .01, .6], [u + .04, .57], [u + .26, .72], [u + .24, .84], [u + .03, .8]], '#272782');
          out += poly([[u, .76], [u + .2, .78], [u + .21, .84], [u, .84]], '#2a2d50');
          for (let n = 0; n < 7; n++) {
            for (const [v, r] of [[.1, 5], [.36, 7], [.62, 7], [.84, 6]]) {
              if (v === .1 && n < 2) continue;
              const [x, y] = this.deck(u + .025 + n * .033, v + n * .018);
              out += `<ellipse cx="${x}" cy="${y}" rx="${r + 5}" ry="${r}" transform="rotate(-50 ${x} ${y})" fill="${v === .1 ? '#2f5650' : '#3a4c30'}"/>`;
              if (n % 2 === 0) out += `<circle cx="${x}" cy="${y}" r="2.500" fill="#17251e"/>`;
            }
          }
        }
        for (let n = 0; n < 80; n++) {
          const [x1, y1] = this.deck(n / 80, .06);
          const [x2, y2] = this.deck(n / 80 - .045, .96);
          out += `<path d="M${x1} ${y1}L${x2} ${y2}" stroke="#2525a0" stroke-dasharray="5 ${9 + n % 4 * 3}" stroke-width="1"/>`;
        }
        return out;
      }

      model() {
        const rails = [[338, 573], [336, 593]];
        const near = [[570, 589], [574, 610]];
        const purlins = [[365, 524], [395, 502], [432, 491], [470, 494], [507, 509], [538, 535]];
        let holes = '', frames = '';

        for (let n = 0; n < 39; n++) {
          const x = Math.round(592 + n * 18.05), y = Math.round(624 - n * 6.35);
          holes += `<ellipse cx="${x}" cy="${y}" rx="2" ry="3"/>`;
          if (n) holes += `<path d="M${x - .5} ${y - 11}V${y - 3}M${x - .5} ${y + 3}V${y + 12}M${x - 8} ${y - 9}l8-2" stroke="#008080" fill="none"/>`;
        }
        for (let n = 0; n < 5; n++) {
          holes += `<ellipse cx="${369 + n * 40}" cy="${617 + n * 3}" rx="2" ry="3"/>`;
        }
        for (let n = 1; n < 40; n++) {
          const [x, y] = this.deck(n / 40, 0);
          frames += `<path d="M${x - 4} ${y - 1}l9-2M${x} ${y + 4}v10" stroke="#0a8a86" opacity=".8"/>`;
        }
        for (let i = 4; i >= 0; i--) {
          if (i < 4) {
            frames += rails.map(([x, y]) => this.bar(x, y, i, '#00009c', '#000060')).join('');
            frames += purlins.map(([x, y]) => this.bar(x, y, i, '#9c9c00', '#5c5c00')).join('');
            frames += near.map(([x, y]) => this.bar(x, y, i, '#00009c', '#000060')).join('');
          }
          frames += this.arch(i);
        }

        return `
          <defs>
            <clipPath id="deck"><polygon points="336,600 1058,345 1299,362 560,613"/></clipPath>
            <pattern id="mesh" width="4" height="4" patternUnits="userSpaceOnUse">
              <path d="M0 0h1v1h-1zM2 2h1v1h-1z" fill="#34389a"/><path d="M2 0h1v1h-1zM0 2h1v1h-1z" fill="#2c4030"/>
            </pattern>
          </defs>
          <g shape-rendering="crispEdges">
            <path d="M676 596h29v66l-4 2h-20l-4-2z"/>
            <path d="M683 665h6v4h-6zM689 664h9v4h-9zM692 667h5v3h-5z" fill="none" stroke="#888"/>
            <path d="M920 520h29v160l-4 2h-21l-4-2z"/>
            <path d="M926 682h6v4h-6zM932 682h9v3h-9zM935 684h6v3h-6z" fill="none" stroke="#888"/>
            <g clip-path="url(#deck)">
              <rect x="320" y="330" width="1000" height="300" fill="#2f423f"/>
              ${this.deckPattern()}
              <rect x="320" y="330" width="1000" height="300" fill="url(#mesh)" opacity=".6"/>
              <polygon points="696,471 930,487 930,496 690,478" fill="#009090"/>
              <path d="M696 471L930 487M700 476L925 491" stroke="#003c3c" fill="none" stroke-dasharray="22 3"/>
              <polygon points="700,478 925,492 880,508 676,487" fill="#2b6a68" opacity=".6"/>
              <polygon points="1060,356 1290,370 1240,384 1040,364" fill="#2b6a68" opacity=".6"/>
              <polygon points="1050,343 1299,361 1299,369 1050,350" fill="#009090"/>
              <path d="M1060 347L1290 362" stroke="#003c3c" stroke-dasharray="22 3"/>
              <path d="M340 602L1050 351" stroke="#0a3d3b" stroke-width="13"/>
            </g>
            <path d="M573 646V611L1302 359V384L1296 392Z" fill="#004c4c"/>
            <path d="M578 612L1300 360V366L585 616Z" fill="#003030"/>
            <path d="M573 647L1302 392" stroke="#007070" fill="none"/>
            <path d="M573 644L1300 390" stroke="#002c2c" fill="none"/>
            <path d="M575 611L1300 358M1296 362h6M1295 392h7" stroke="#009090" fill="none"/>
            <path d="M313 592h4v-2h12l16 6v3l210 14v-4l28 1v21l-10 1v14L325 629l5-2V612h-17z" fill="#009090"/>
            <path d="M314 592v20M342 596v20M343 599L555 613M345 600L555 614M557 612v20M330 629L573 645M583 611v22" stroke="#003838" fill="none"/>
            <path d="M360 602l20 1M440 607l20 1M500 611l20 1M340 631L575 647" stroke="#00b0b0" fill="none"/>
            ${holes}
            <path d="M322 609h11v11h-11zM328 609v6M565 626h11v11h-11zM572 628h8v7h-8zM1293 371h9v11h-9M1296 375h6" fill="none" stroke="#888"/>
            <path d="M327 613h3v4h-3zM571 629h3v5h-3zM328 592h10v3h-10zM570 609h4v2h-4z"/>
            <path d="M930 503h19v24h-19z"/>
            ${frames}
          </g>`;
      }

      triad() {
        return `
          <g shape-rendering="crispEdges" fill="none">
            <path d="M168.500 903V880" stroke="#0000a0"/><path d="M168 870l5 11h-9z" fill="#0000c0"/>
            <path d="M168 902.500H188" stroke="#00a000"/><path d="M197 902.500l-11-4v8z" fill="#00b400"/>
            <path d="M168 903l-9 3" stroke="#c00000"/>
          </g>
          <text x="152" y="908">x</text><circle cx="159" cy="904" r="4" fill="#f00000"/>
          <text x="168" y="865">z</text><text x="201" y="905">y</text>`;
      }
    }

    class StatusBar extends HTMLElement {
      constructor() {
        super();
        this.attachShadow({ mode: 'open' });
        this.shadowRoot.innerHTML = `
          <style>
            :host {
              display: flex;
              gap: 2px;
              box-sizing: border-box;
              height: 18px;
              padding: 2px 0 0 2px;
            }
            span {
              box-sizing: border-box;
              padding-left: 2px;
              border: 1px solid;
              border-color: #a0a0a0 #fff #fff #a0a0a0;
              line-height: 16px;
              white-space: nowrap;
            }
            .msg { flex: 1; padding-left: 0; border-color: transparent; }
            .p { width: 15px; }
            .m { width: 24px; }
            .xyz { width: 207px; }
            .free { width: 171px; }
            .sel { width: 63px; }
            .layer { width: 76px; }
          </style>
          <span class="msg">Готов</span>
          <span class="p">П</span>
          <span class="m">м</span>
          <span class="xyz">X = 5.77 Y = -15.05 Z = 0.83</span>
          <span class="free"></span>
          <span class="sel">Выбрать</span>
          <span class="layer">Layer 0</span>
        `;
      }
    }

    customElements.define('tool-bar', ToolBar);
    customElements.define('title-bar', TitleBar);
    customElements.define('menu-bar', MenuBar);
    customElements.define('child-window', ChildWindow);
    customElements.define('scale-ruler', ScaleRuler);
    customElements.define('bridge-view', BridgeView);
    customElements.define('status-bar', StatusBar);
  </script>
</body>
</html>
